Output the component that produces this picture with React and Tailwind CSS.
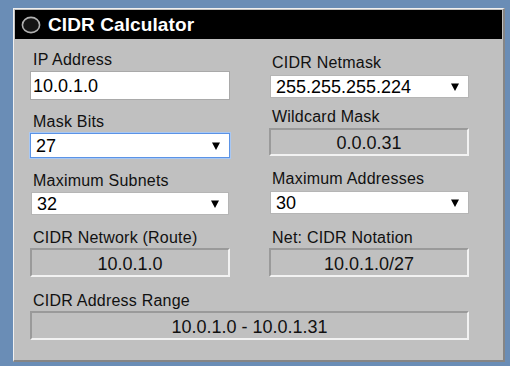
import React from "react";

const font = { fontFamily: '"Liberation Sans", Arial, sans-serif' };

function Label({ children, className = "" }) {
  return (
    <div className={"h-[18px] leading-[18px] text-[16px] tracking-[0.22px] text-[#111] pl-[3px] whitespace-nowrap " + className}>
      {children}
    </div>
  );
}

function Arrow() {
  return (
    <svg width="8" height="8" viewBox="0 0 8 8" className="shrink-0">
      <polygon points="0,0.5 8,0.5 4,8" fill="#000" />
    </svg>
  );
}

function Select({ value, className = "", focus = false }) {
  return (
    <div
      className={
        "flex items-center justify-between bg-white pl-[5px] pr-[9px] text-[18px] text-black " +
        (focus
          ? "border border-[#5b93e6] shadow-[0_0_0_1px_#a9c8f3] "
          : "border border-[#b5b5b5] ") +
        className
      }
    >
      <span className="leading-[20px]">{value}</span>
      <Arrow />
    </div>
  );
}

function ReadBox({ value, className = "" }) {
  return (
    <div
      className={
        "flex items-center justify-center pt-[2px] bg-[#c0c0c0] border-2 border-t-[#9a9a9a] border-l-[#9a9a9a] border-b-[#f2f2f2] border-r-[#f2f2f2] text-[18px] text-[#111] " +
        className
      }
    >
      <span className="leading-[20px]">{value}</span>
    </div>
  );
}

export default function App() {
  return (
    <div className="w-[510px] h-[366px] bg-[#6a8db6] pt-[8px] pl-[13px]" style={font}>
      <div className="w-[492px] h-[354px] bg-[#c0c0c0] border-t border-l border-t-[#f0f0f0] border-l-[#f0f0f0] border-r-2 border-b-2 border-r-[#858585] border-b-[#858585] p-[1px]">
        <div className="h-[29px] bg-black flex items-center">
          <svg width="20" height="18" viewBox="0 0 20 18" className="ml-[6px]">
            <ellipse cx="10" cy="9" rx="8.6" ry="7.6" fill="#151515" stroke="#b0b0b0" strokeWidth="1.6" />
          </svg>
          <span className="ml-[7px] text-white font-bold text-[19px] tracking-[0.1px] leading-[22px]">CIDR Calculator</span>
        </div>
        <div className="pl-[15px]">
          <div className="flex items-start gap-[39px]">
            <div className="w-[200px] flex flex-col">
              <Label className="mt-[12px]">IP Address</Label>
              <div className="mt-[2px] h-[29px] bg-white border border-[#a9a9a9] flex items-center pl-[2px] text-[18px] text-black">
                <span className="leading-[20px]">10.0.1.0</span>
              </div>
              <Label className="mt-[13px]">Mask Bits</Label>
              <Select value="27" focus className="mt-[2px] h-[25px]" />
              <Label className="mt-[14px]">Maximum Subnets</Label>
              <Select value="32" className="mt-[2px] h-[23px] ml-[1px] w-[198px]" />
              <Label className="mt-[14px]">CIDR Network (Route)</Label>
              <ReadBox value="10.0.1.0" className="mt-[1px] h-[29px]" />
            </div>
            <div className="w-[200px] flex flex-col">
              <Label className="mt-[15px]">CIDR Netmask</Label>
              <Select value="255.255.255.224" className="mt-[3px] h-[23px] ml-[1px] w-[199px]" />
              <Label className="mt-[10px]">Wildcard Mask</Label>
              <ReadBox value="0.0.0.31" className="mt-[2px] h-[28px]" />
              <Label className="mt-[14px]">Maximum Addresses</Label>
              <Select value="30" className="mt-[3px] h-[23px] ml-[1px] w-[199px]" />
              <Label className="mt-[15px]">Net: CIDR Notation</Label>
              <ReadBox value="10.0.1.0/27" className="mt-[1px] h-[29px]" />
            </div>
          </div>
          <Label className="mt-[15px]">CIDR Address Range</Label>
          <ReadBox value="10.0.1.0 - 10.0.1.31" className="mt-[1px] h-[29px] w-[439px]" />
        </div>
      </div>
    </div>
  );
}
